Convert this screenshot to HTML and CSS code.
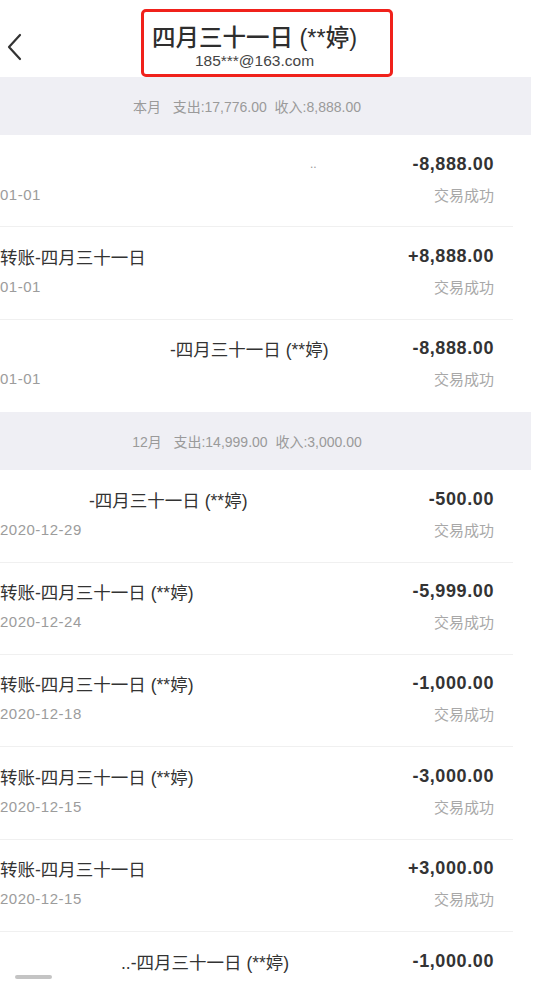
FILE: index.html
```html
<!DOCTYPE html>
<html lang="zh">
<head>
<meta charset="utf-8">
<title>账单</title>
<link rel="stylesheet" href="styles.css">
</head>
<body>
<div class="page">
  <header class="header">
    <div class="back">
      <svg width="16" height="28" viewBox="0 0 16 28"><polyline points="13,2 2,14 13,26" fill="none" stroke="#333" stroke-width="2.2" stroke-linecap="round" stroke-linejoin="round"/></svg>
    </div>
    <div class="title-box">
      <div class="title-inner">
        <div class="title">四月三十一日 (**婷)</div>
        <div class="subtitle">185***@163.com</div>
      </div>
    </div>
  </header>

  <div class="month-bar">本月&nbsp;&nbsp;&nbsp;支出:17,776.00&nbsp;&nbsp;收入:8,888.00</div>
  <div class="row">
    <div class="line"><span class="name"><span class="gap" style="width:310px"></span><span class="dots">..</span></span><span class="amount">-8,888.00</span></div>
    <div class="line"><span class="date">01-01</span><span class="status">交易成功</span></div>
  </div>
  <div class="row">
    <div class="line"><span class="name">转账-四月三十一日</span><span class="amount">+8,888.00</span></div>
    <div class="line"><span class="date">01-01</span><span class="status">交易成功</span></div>
  </div>
  <div class="row last">
    <div class="line"><span class="name"><span class="gap" style="width:170px"></span>-四月三十一日 (**婷)</span><span class="amount">-8,888.00</span></div>
    <div class="line"><span class="date">01-01</span><span class="status">交易成功</span></div>
  </div>

  <div class="month-bar">12月&nbsp;&nbsp;&nbsp;支出:14,999.00&nbsp;&nbsp;收入:3,000.00</div>
  <div class="row">
    <div class="line"><span class="name"><span class="gap" style="width:89px"></span>-四月三十一日 (**婷)</span><span class="amount">-500.00</span></div>
    <div class="line"><span class="date">2020-12-29</span><span class="status">交易成功</span></div>
  </div>
  <div class="row">
    <div class="line"><span class="name">转账-四月三十一日 (**婷)</span><span class="amount">-5,999.00</span></div>
    <div class="line"><span class="date">2020-12-24</span><span class="status">交易成功</span></div>
  </div>
  <div class="row">
    <div class="line"><span class="name">转账-四月三十一日 (**婷)</span><span class="amount">-1,000.00</span></div>
    <div class="line"><span class="date">2020-12-18</span><span class="status">交易成功</span></div>
  </div>
  <div class="row">
    <div class="line"><span class="name">转账-四月三十一日 (**婷)</span><span class="amount">-3,000.00</span></div>
    <div class="line"><span class="date">2020-12-15</span><span class="status">交易成功</span></div>
  </div>
  <div class="row">
    <div class="line"><span class="name">转账-四月三十一日</span><span class="amount">+3,000.00</span></div>
    <div class="line"><span class="date">2020-12-15</span><span class="status">交易成功</span></div>
  </div>
  <div class="row">
    <span class="smudge"></span>
    <div class="line"><span class="name"><span class="gap" style="width:121px"></span>..-四月三十一日 (**婷)</span><span class="amount">-1,000.00</span></div>
  </div>
</div>
</body>
</html>
```
FILE: styles.css
```css
html, body {
  margin: 0;
  padding: 0;
  background: #ffffff;
}
body {
  font-family: "Liberation Sans", "Noto Sans CJK SC", sans-serif;
  color: #333333;
  width: 540px;
  height: 982px;
  overflow: hidden;
}
.page {
  width: 531px;
}
.header {
  display: flex;
  align-items: flex-start;
  height: 77px;
  box-sizing: border-box;
  padding-top: 9px;
}
.back {
  margin-left: 7px;
  margin-top: 24px;
  width: 16px;
  height: 28px;
}
.back svg {
  display: block;
}
.title-box {
  margin-left: 118px;
  width: 252px;
  height: 68px;
  box-sizing: border-box;
  border: 3px solid #f0211b;
  border-radius: 5px;
  padding: 12px 0 0 8px;
}
.title-inner {
  display: inline-block;
  text-align: center;
}
.title {
  font-size: 23.5px;
  line-height: 28px;
  font-weight: 500;
  color: #2e2e2e;
  white-space: nowrap;
}
.subtitle {
  font-size: 15.5px;
  line-height: 18px;
  color: #444444;
}
.month-bar {
  height: 58px;
  box-sizing: border-box;
  background: #efeff4;
  padding-right: 37px;
  display: flex;
  align-items: center;
  justify-content: center;
  font-size: 14px;
  color: #9a9a9a;
  white-space: nowrap;
}
.row {
  position: relative;
  height: 92.4px;
  box-sizing: border-box;
  margin-right: 18px;
  padding: 17px 19px 0 0;
  border-bottom: 1px solid #f0f0f0;
}
.row.last {
  border-bottom: none;
}
.line {
  display: flex;
  justify-content: space-between;
  align-items: center;
  height: 24px;
}
.line + .line {
  margin-top: 6px;
}
.name {
  font-size: 17.5px;
  color: #333333;
  white-space: nowrap;
  display: flex;
  align-items: center;
}
.gap {
  display: inline-block;
  height: 1px;
}
.dots {
  font-size: 12px;
  color: #9a9a9a;
}
.amount {
  font-size: 18px;
  font-weight: 700;
  letter-spacing: 0.6px;
  color: #333333;
}
.date {
  font-size: 15px;
  letter-spacing: 0.5px;
  color: #9c9c9c;
}
.status {
  font-size: 15px;
  color: #a8a8a8;
}
.smudge {
  position: absolute;
  left: 15px;
  top: 43px;
  width: 37px;
  height: 4px;
  background: #c4c4c4;
  border-radius: 2px;
  filter: blur(0.6px);
}
```
